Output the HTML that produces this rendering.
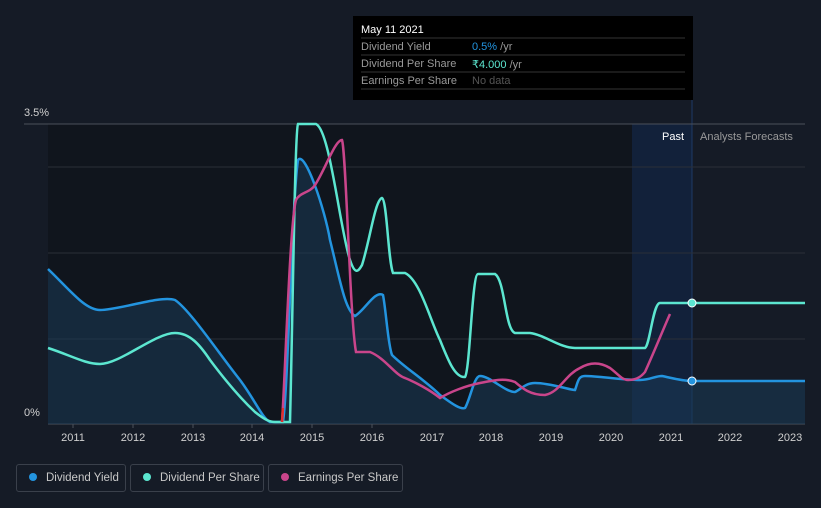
<!DOCTYPE html>
<html><head><style>
body{margin:0;background:#151b26;width:821px;height:508px;overflow:hidden;font-family:"Liberation Sans","Noto Sans CJK SC",sans-serif;}
.tt{position:absolute;left:353px;top:16px;width:340px;height:84px;background:#000;}
.tt div{position:absolute;left:8px;font-size:11px;color:#999;white-space:nowrap;}
.leg{position:absolute;top:464px;height:28px;border:1px solid #3a404b;border-radius:3px;color:#c8c8c8;font-size:12px;line-height:26px;box-sizing:border-box;white-space:nowrap;overflow:hidden;}
.leg i{display:inline-block;width:8px;height:8px;border-radius:50%;margin:0 9px 0 12px;}
</style></head><body>
<svg width="821" height="508" style="position:absolute;left:0;top:0">
<rect x="48" y="124" width="584" height="300" fill="#10151d"/>
<rect x="632" y="124" width="60" height="300" fill="#12213a"/>
<line x1="692" y1="100" x2="692" y2="424" stroke="#1d3a66"/>
<g stroke="#2a2f38" stroke-width="1"><line x1="48" y1="167" x2="805" y2="167"/><line x1="48" y1="253" x2="805" y2="253"/><line x1="48" y1="339" x2="805" y2="339"/></g>
<line x1="24" y1="124" x2="805" y2="124" stroke="#4a505a"/>
<line x1="48" y1="424" x2="805" y2="424" stroke="#4a505a"/>
<path d="M48,269 C70,290 85,310 100,310 C120,310 160,295 175,300 C190,310 220,355 240,380 C255,400 262,418 270,422 L283,422 C288,390 292,200 298,160 C305,150 325,210 330,240 C340,280 345,310 355,316 C365,310 375,290 383,295 C386,310 388,345 392,355 C405,368 425,380 440,395 C450,402 460,410 465,408 C470,400 474,376 480,376 C490,376 505,392 515,392 C520,390 525,383 535,383 C550,383 570,390 575,390 C578,382 578,376 585,376 C600,376 620,380 640,380 C650,380 655,376 662,376 C672,378 682,381 692,381 L805,381 L805,424 L48,424Z" fill="#1a3a55" fill-opacity="0.55"/>
<path d="M48,269 C70,290 85,310 100,310 C120,310 160,295 175,300 C190,310 220,355 240,380 C255,400 262,418 270,422 L283,422 C288,390 292,200 298,160 C305,150 325,210 330,240 C340,280 345,310 355,316 C365,310 375,290 383,295 C386,310 388,345 392,355 C405,368 425,380 440,395 C450,402 460,410 465,408 C470,400 474,376 480,376 C490,376 505,392 515,392 C520,390 525,383 535,383 C550,383 570,390 575,390 C578,382 578,376 585,376 C600,376 620,380 640,380 C650,380 655,376 662,376 C672,378 682,381 692,381 L805,381" fill="none" stroke="#2394df" stroke-width="2.5"/>
<path d="M48,348 C70,355 85,364 100,364 C120,364 155,333 175,333 C190,333 200,345 210,360 C225,380 240,398 255,412 C265,420 270,422 275,422 L290,422 C293,300 295,130 298,124 L316,124 C330,130 340,230 350,260 C355,275 358,272 362,265 C370,240 375,200 382,198 C387,200 388,260 393,273 L405,273 C420,280 430,320 440,340 C448,360 455,378 465,377 C470,370 472,274 478,274 L495,274 C505,280 505,330 515,333 L530,333 C545,335 560,348 575,348 L645,348 C650,345 653,303 660,303 L805,303" fill="none" stroke="#5ce6d0" stroke-width="2.5"/>
<path d="M282,422 C285,380 290,220 296,200 C300,192 310,193 315,185 C325,170 335,140 342,140 C346,150 350,320 356,352 L370,352 C385,358 395,375 405,378 C415,382 430,390 440,398 C450,392 465,386 480,383 C495,380 505,378 515,382 C522,388 530,395 545,395 C560,392 565,375 580,368 C590,362 600,362 610,368 C618,374 622,380 628,380 C635,380 640,378 645,372 C655,350 665,325 670,314" fill="none" stroke="#c9458b" stroke-width="2.5"/>
<line x1="282" y1="422" x2="283" y2="408" stroke="#e0302f" stroke-width="2.5"/>
<circle cx="692" cy="303" r="4" fill="#5ce6d0" stroke="#fff" stroke-width="1"/>
<circle cx="692" cy="381" r="4" fill="#2394df" stroke="#fff" stroke-width="1"/>
<g fill="#d0d0d0" font-size="11" text-anchor="middle" font-family="Liberation Sans,sans-serif">
<text x="73" y="441">2011</text><text x="133" y="441">2012</text><text x="193" y="441">2013</text><text x="252" y="441">2014</text><text x="312" y="441">2015</text><text x="372" y="441">2016</text><text x="432" y="441">2017</text><text x="491" y="441">2018</text><text x="551" y="441">2019</text><text x="611" y="441">2020</text><text x="671" y="441">2021</text><text x="730" y="441">2022</text><text x="790" y="441">2023</text>
</g>
<g stroke="#4a505a"><line x1="73" y1="424" x2="73" y2="428"/><line x1="133" y1="424" x2="133" y2="428"/><line x1="193" y1="424" x2="193" y2="428"/><line x1="252" y1="424" x2="252" y2="428"/><line x1="312" y1="424" x2="312" y2="428"/><line x1="372" y1="424" x2="372" y2="428"/></g>
<text x="24" y="116" fill="#d0d0d0" font-size="11">3.5%</text>
<text x="24" y="416" fill="#d0d0d0" font-size="11">0%</text>
<text x="684" y="140" fill="#fff" font-size="11" text-anchor="end">Past</text>
<text x="700" y="140" fill="#999" font-size="11">Analysts Forecasts</text>
</svg>
<div class="tt">
<div style="top:8px;color:#fff;font-size:11px">May 11 2021</div>
<div style="top:25px">Dividend Yield</div><div style="top:25px;left:119px"><span style="color:#2394df">0.5%</span> /yr</div>
<div style="top:42px">Dividend Per Share</div><div style="top:42px;left:119px"><span style="color:#5ce6d0">₹4.000</span> /yr</div>
<div style="top:59px">Earnings Per Share</div><div style="top:59px;left:119px;color:#555">No data</div>
<svg width="340" height="84" style="position:absolute;left:0;top:0"><g stroke="#333"><line x1="8" y1="22" x2="332" y2="22"/><line x1="8" y1="39" x2="332" y2="39"/><line x1="8" y1="56" x2="332" y2="56"/><line x1="8" y1="73" x2="332" y2="73"/></g></svg>
</div>
<div class="leg" style="left:16px;width:110px;font-size:11.5px"><i style="background:#2394df"></i>Dividend Yield</div>
<div class="leg" style="left:130px;width:134px;font-size:11.5px"><i style="background:#5ce6d0"></i>Dividend Per Share</div>
<div class="leg" style="left:268px;width:135px;font-size:11.5px"><i style="background:#c9458b"></i>Earnings Per Share</div>
</body></html>
